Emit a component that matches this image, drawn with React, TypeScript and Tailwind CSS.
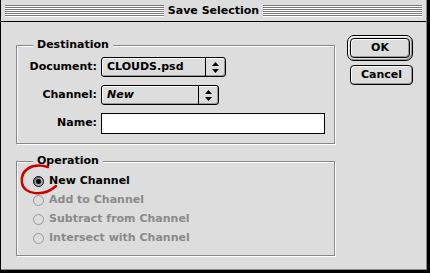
import React from "react";

const stripes =
  "flex-1 h-[12px] bg-[repeating-linear-gradient(to_bottom,#7a7a7a_0px,#7a7a7a_1px,#ffffff_1px,#ffffff_2px)]";

const Arrows = () => (
  <svg width="7" height="11" viewBox="0 0 7 11">
    <polygon points="3.5,0 7,4 0,4" fill="#000" />
    <polygon points="0,7 7,7 3.5,11" fill="#000" />
  </svg>
);

const Popup = ({ value, width, italic }: { value: string; width: string; italic?: boolean }) => (
  <div
    className={`${width} h-[20px] flex rounded-[3px] border border-black bg-[#dddddd] shadow-[inset_1px_1px_0_#fff,inset_-1px_-1px_0_#999]`}
  >
    <div className={`flex-1 flex items-center pl-[5px] ${italic ? "italic" : ""}`}>{value}</div>
    <div className="w-[20px] flex items-center justify-center border-l border-black">
      <Arrows />
    </div>
  </div>
);

const GroupBox = ({ label, children }: { label: string; children: React.ReactNode }) => (
  <div className="relative border border-[#888888] shadow-[1px_1px_0_#fff,inset_1px_1px_0_#fff]">
    <span className="absolute left-[16px] top-[-8px] bg-[#dddddd] px-[4px] leading-[14px]">{label}</span>
    {children}
  </div>
);

const Radio = ({ label, checked, disabled }: { label: string; checked?: boolean; disabled?: boolean }) => (
  <div className={`h-[19px] flex items-center gap-[5px] ${disabled ? "text-[#8a8a8a]" : "text-black"}`}>
    {checked ? (
      <div className="w-[11px] h-[11px] rounded-full border border-black bg-[#aaaaaa] flex items-center justify-center shadow-[inset_1px_1px_0_#666]">
        <div className="w-[5px] h-[5px] rounded-full bg-black" />
      </div>
    ) : (
      <div className="w-[11px] h-[11px] rounded-full border border-[#999999]" />
    )}
    <span>{label}</span>
  </div>
);

export default function App() {
  return (
    <div className="w-[430px] h-[273px] bg-black font-['DejaVu_Sans',sans-serif] text-[11px] font-bold text-black">
      <div className="relative ml-[1px] w-[426px] h-[270px] bg-[#dddddd] border-r border-b border-[#888888] flex flex-col">
        {/* Title bar */}
        <div className="h-[22px] border-b border-black flex items-center px-[4px] pt-[1px]">
          <div className={stripes} />
          <span className="px-[4px] text-[11px] leading-[12px]">Save Selection</span>
          <div className={stripes} />
        </div>

        <div className="flex">
          {/* Left column */}
          <div className="ml-[15px] w-[319px] flex flex-col">
            <div className="mt-[23px]">
              <GroupBox label="Destination">
                <div className="pt-[11px] pb-[9px] flex flex-col gap-[8px]">
                  <div className="flex items-center">
                    <span className="w-[84px] text-right pr-[4px]">Document:</span>
                    <Popup value="CLOUDS.psd" width="w-[125px]" />
                  </div>
                  <div className="flex items-center">
                    <span className="w-[84px] text-right pr-[4px]">Channel:</span>
                    <Popup value="New" width="w-[118px]" italic />
                  </div>
                  <div className="flex items-center">
                    <span className="w-[84px] text-right pr-[4px]">Name:</span>
                    <div className="w-[224px] h-[21px] bg-white border border-black" />
                  </div>
                </div>
              </GroupBox>
            </div>

            <div className="mt-[17px]">
              <GroupBox label="Operation">
                <div className="pt-[10px] pb-[7px] pl-[16px] flex flex-col">
                  <Radio label="New Channel" checked />
                  <Radio label="Add to Channel" disabled />
                  <Radio label="Subtract from Channel" disabled />
                  <Radio label="Intersect with Channel" disabled />
                </div>
              </GroupBox>
            </div>
          </div>

          {/* Buttons */}
          <div className="ml-[12px] mt-[13px] w-[66px] flex flex-col items-end gap-[4px]">
            <div className="w-[66px] h-[26px] rounded-[7px] border border-black bg-[#dddddd] p-[2px] shadow-[inset_1px_1px_0_#fff,inset_-1px_-1px_0_#999]">
              <div className="w-full h-full rounded-[4px] border border-black flex items-center justify-center shadow-[inset_1px_1px_0_#fff,inset_-1px_-1px_0_#999]">
                OK
              </div>
            </div>
            <div className="w-[63px] h-[20px] rounded-[4px] border border-black flex items-center justify-center shadow-[inset_1px_1px_0_#fff,inset_-1px_-1px_0_#999]">
              Cancel
            </div>
          </div>
        </div>

        {/* Red annotation around the selected radio */}
        <svg className="absolute left-0 top-0 pointer-events-none" width="426" height="270">
          <path
            d="M 47 167 C 30 162, 19 171, 21 183 C 23 195, 43 197, 55 186"
            fill="none"
            stroke="#cc0000"
            strokeWidth="2.5"
            strokeLinecap="round"
          />
        </svg>
      </div>
    </div>
  );
}
